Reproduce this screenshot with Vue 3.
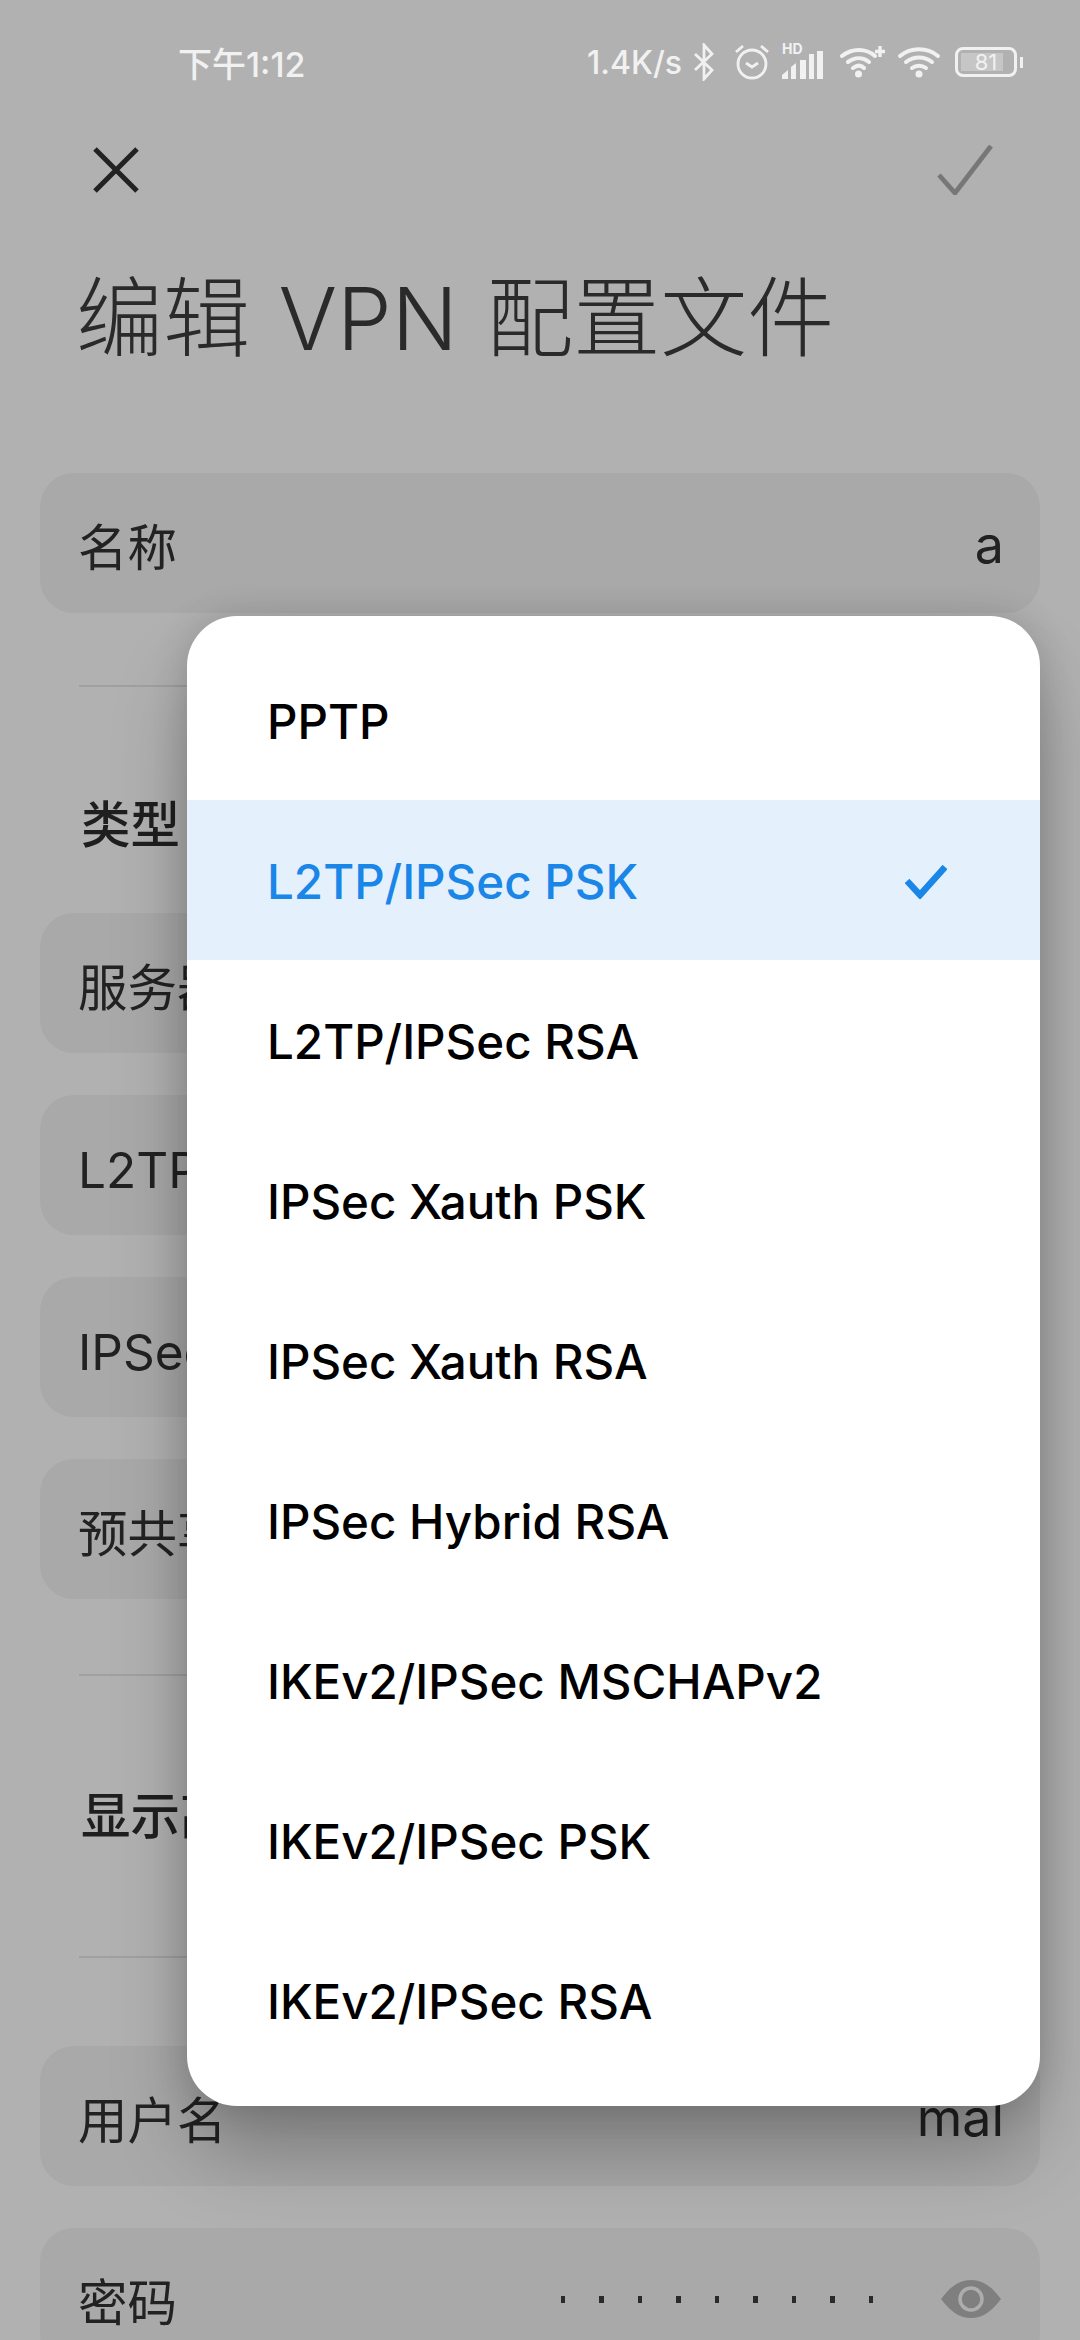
<script setup>
const options = ['PPTP','L2TP/IPSec PSK','L2TP/IPSec RSA','IPSec Xauth PSK','IPSec Xauth RSA','IPSec Hybrid RSA','IKEv2/IPSec MSCHAPv2','IKEv2/IPSec PSK','IKEv2/IPSec RSA']
const selected = 'L2TP/IPSec PSK'
const group = ['服务器地址','L2TP 密钥','IPSec 标识符','预共享密钥']
const dots = Array.from({ length: 9 })
</script>

<template>
  <div class="page">
    <div class="status">
      <span class="time">下午1:12</span>
      <div class="status-right">
        <span class="speed">1.4K/s</span>
        <svg class="bt" width="20" height="38" viewBox="0 0 20 38" fill="none" stroke="#f1f1f1" stroke-width="2.8"><path d="M1 11l17 16-8 9V2l8 9L1 27"/></svg>
        <svg class="alarm" width="36" height="36" viewBox="0 0 36 36" fill="none" stroke="#f1f1f1" stroke-width="2.8"><circle cx="18" cy="20" r="14"/><path d="M2 8l7-6M34 8l-7-6M12 19l6 4 6-4"/></svg>
        <span class="signal">
          <span class="hd">HD</span>
          <svg width="41" height="30" viewBox="0 0 41 30" fill="#f1f1f1"><path d="M0 29v-4l6-5v9zM9 29V17l5-4v16zM18 29V10h6v19zM27 29V4h5v25zM35 29V1h6v28z"/></svg>
        </span>
        <svg class="wifi-plus" width="46" height="34" viewBox="0 0 46 34" fill="none" stroke="#f1f1f1" stroke-width="4" stroke-linecap="round"><path d="M2 11c10-8 24-8 33 0M8 17c7-5 15-5 21 0M13 23c4-3 8-3 11 0"/><circle cx="18.500" cy="29" r="3.500" fill="#f1f1f1" stroke="none"/><path d="M40 1v11M35 6.500h10" stroke-width="3.400" stroke-linecap="butt"/></svg>
        <svg class="wifi" width="44" height="34" viewBox="0 0 44 34" fill="none" stroke="#f1f1f1" stroke-width="4" stroke-linecap="round"><path d="M3 11c11-9 27-9 38 0M9 17c8-6 18-6 26 0M15 23c4-3 10-3 14 0"/><circle cx="22" cy="29" r="3.500" fill="#f1f1f1" stroke="none"/></svg>
        <span class="battery"><span class="battery-fill"></span><span class="battery-num">81</span></span>
        <span class="battery-tip"></span>
      </div>
    </div>

    <div class="toolbar">
      <svg width="46" height="46" viewBox="0 0 46 46" fill="none" stroke="#222" stroke-width="5"><path d="M2 2l42 42M44 2L2 44"/></svg>
      <svg width="56" height="50" viewBox="0 0 56 50" fill="none" stroke="#777" stroke-width="4.800"><path d="M2 30l16 18L54 1"/></svg>
    </div>

    <h1 class="title">编辑 VPN 配置文件</h1>

    <div class="form">
      <div class="field"><span>名称</span><span class="value">a</span></div>
      <div class="divider first"></div>
      <div class="plain type">类型</div>
      <div class="group">
        <div class="field" v-for="label in group" :key="label"><span>{{ label }}</span></div>
      </div>
      <div class="divider second"></div>
      <div class="plain advanced">显示高级选项</div>
      <div class="divider third"></div>
      <div class="group bottom">
        <div class="field"><span>用户名</span><span class="value">mal</span></div>
        <div class="field">
          <span>密码</span>
          <span class="secret">
            <span class="dots"><i v-for="(d, i) in dots" :key="i"></i></span>
            <svg width="60" height="40" viewBox="0 0 60 40"><path d="M0 20C9 8 18 1 30 1s21 7 30 19C51 32 42 39 30 39S9 32 0 20z" fill="#7f7f7f"/><circle cx="30" cy="20" r="11" fill="none" stroke="#adadad" stroke-width="3.500"/></svg>
          </span>
        </div>
      </div>
    </div>

    <div class="dialog">
      <div class="option" v-for="o in options" :key="o" :class="{ active: o === selected }">
        <span>{{ o }}</span>
        <svg v-if="o === selected" width="42" height="34" viewBox="0 0 42 34" fill="none" stroke="#1a86e8" stroke-width="6.500"><path d="M2 16l13 14L40 2"/></svg>
      </div>
    </div>
  </div>
</template>

<style>
html, body { margin: 0; background: #b0b0b0; }
</style>

<style scoped>
.page {
  position: relative;
  width: 1080px;
  height: 2340px;
  overflow: hidden;
  background: #b1b1b1;
  color: #222;
  font-family: Inter, "Noto Sans CJK SC", sans-serif;
}
.status {
  height: 124px;
  box-sizing: border-box;
  padding: 0 57px 0 178px;
  display: flex;
  align-items: center;
  justify-content: space-between;
  color: #f1f1f1;
}
.time { font-size: 34px; font-weight: 500; }
.status-right { display: flex; align-items: center; }
.speed { font-size: 32px; font-weight: 500; width: 107px; white-space: nowrap; }
.alarm { margin-left: 20px; }
.signal { position: relative; display: flex; margin-left: 12px; width: 41px; height: 36px; align-items: flex-end; }
.hd { position: absolute; left: 0; top: -4px; font-size: 14px; font-weight: 700; }
.wifi-plus { margin-left: 17px; }
.wifi { margin-left: 11px; }
.battery {
  position: relative;
  margin-left: 14px;
  width: 62px;
  height: 30px;
  box-sizing: border-box;
  border: 3px solid #f1f1f1;
  border-radius: 8px;
  display: flex;
  align-items: center;
  justify-content: center;
}
.battery-fill { position: absolute; left: 3px; top: 3px; bottom: 3px; width: 42px; background: #c6c6c6; }
.battery-num { position: relative; font-size: 22px; line-height: 1; }
.battery-tip { width: 3px; height: 11px; margin-left: 3px; background: #f1f1f1; }
.toolbar {
  height: 92px;
  padding: 0 87px 0 93px;
  display: flex;
  align-items: center;
  justify-content: space-between;
}
.title {
  margin: 53px 0 0 76px;
  font-size: 87px;
  line-height: 100px;
  font-weight: 300;
  word-spacing: 4px;
  color: #2a2a2a;
  white-space: pre;
}
.form { margin-top: 104px; padding: 0 40px; font-size: 49.500px; }
.field {
  height: 140px;
  box-sizing: border-box;
  padding: 2px 36px 0 38px;
  border-radius: 34px;
  background: #a9a9a9;
  display: flex;
  align-items: center;
  justify-content: space-between;
}
.value { font-size: 52px; }
.group { display: flex; flex-direction: column; gap: 42px; }
.divider { height: 2px; margin-left: 39px; background: #a0a0a0; }
.divider.first { margin-top: 72px; }
.divider.second { margin-top: 75px; }
.divider.third { margin-top: 0; }
.plain { padding-left: 41px; line-height: 60px; font-weight: 500; color: #1f1f1f; }
.type { padding-top: 108px; padding-bottom: 58px; }
.advanced { padding-top: 110px; padding-bottom: 110px; }
.group.bottom { margin-top: 88px; }
.secret { display: flex; align-items: center; gap: 68px; margin-right: 3px; }
.dots { display: flex; gap: 34px; }
.dots i { display: block; width: 4.500px; height: 7px; background: #2a2a2a; }
.dialog {
  position: absolute;
  left: 187px;
  top: 616px;
  width: 853px;
  height: 1490px;
  box-sizing: border-box;
  padding-top: 24px;
  background: #fff;
  border-radius: 50px;
  box-shadow: 0 0 36px rgba(0, 0, 0, 0.14), 0 50px 80px -6px rgba(0, 0, 0, 0.28);
  overflow: hidden;
  color: #000;
}
.option {
  height: 160px;
  box-sizing: border-box;
  padding: 3px 93px 0 80px;
  display: flex;
  align-items: center;
  justify-content: space-between;
  font-size: 47.500px;
  font-weight: 500;
  white-space: nowrap;
}
.option.active { background: #e4f0fb; color: #1a86e8; }
</style>
